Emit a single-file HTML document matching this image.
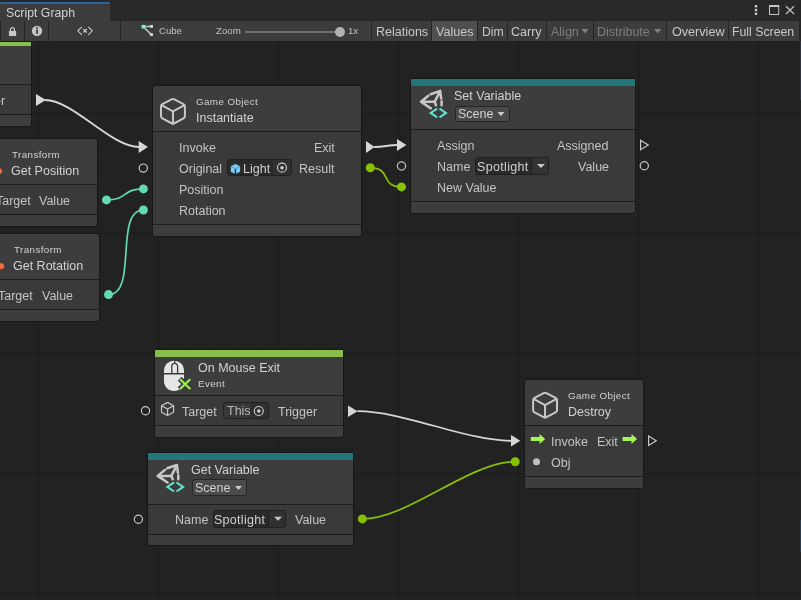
<!DOCTYPE html><html><head><meta charset="utf-8"><style>
*{margin:0;padding:0;box-sizing:border-box}
html,body{width:801px;height:600px;overflow:hidden;background:#222222}
body{position:relative;font-family:"Liberation Sans",sans-serif}
.t{position:absolute;line-height:1;white-space:nowrap;will-change:transform}
.node{position:absolute;background:#3d3d3d;border:1px solid #171717;border-radius:3px;box-sizing:content-box}
svg{position:absolute;left:0;top:0;overflow:visible}
</style></head><body>
<div style="position:absolute;left:0;top:41px;width:801px;height:559px;background-color:#222222;background-image:linear-gradient(to right,#1a1a1a 0,#1a1a1a 1px,transparent 1px),linear-gradient(to bottom,#1a1a1a 0,#1a1a1a 1px,transparent 1px),linear-gradient(to right,#202020 0,#202020 1px,transparent 1px),linear-gradient(to bottom,#202020 0,#202020 1px,transparent 1px);background-size:120px 120px,120px 120px,12px 12px,12px 12px;background-position:38px 72px,38px 72px,2px 0px,2px 0px;"></div>
<div style="position:absolute;left:0;top:0;width:801px;height:41px;z-index:5">
<div style="position:absolute;left:0px;top:0px;width:801px;height:21px;background:#282828"></div>
<div style="position:absolute;left:0px;top:2px;width:110px;height:19px;background:#3c3c3c"></div>
<div style="position:absolute;left:0px;top:2px;width:110px;height:2px;background:#2d65a0;border-radius:2px 2px 0 0"></div>
<div class="t" style="left:6.30px;top:6.99px;font-size:12.3px;color:#d2d2d2;">Script Graph</div>
<div style="position:absolute;left:0px;top:21px;width:801px;height:20px;background:#3c3c3c"></div>
<div style="position:absolute;left:0px;top:21px;width:1px;height:20px;background:#242424"></div>
<div style="position:absolute;left:24px;top:21px;width:1px;height:20px;background:#242424"></div>
<div style="position:absolute;left:48px;top:21px;width:1px;height:20px;background:#242424"></div>
<div style="position:absolute;left:120px;top:21px;width:1px;height:20px;background:#242424"></div>
<div style="position:absolute;left:371px;top:21px;width:1px;height:20px;background:#242424"></div>
<div style="position:absolute;left:431px;top:21px;width:1px;height:20px;background:#242424"></div>
<div style="position:absolute;left:477px;top:21px;width:1px;height:20px;background:#242424"></div>
<div style="position:absolute;left:507px;top:21px;width:1px;height:20px;background:#242424"></div>
<div style="position:absolute;left:546px;top:21px;width:1px;height:20px;background:#242424"></div>
<div style="position:absolute;left:593px;top:21px;width:1px;height:20px;background:#242424"></div>
<div style="position:absolute;left:666px;top:21px;width:1px;height:20px;background:#242424"></div>
<div style="position:absolute;left:728px;top:21px;width:1px;height:20px;background:#242424"></div>
<div style="position:absolute;left:432px;top:21px;width:45px;height:20px;background:#4f4f4f"></div>
<div class="t" style="left:376.20px;top:25.82px;font-size:12.5px;color:#c9c9c9;">Relations</div>
<div class="t" style="left:436.20px;top:25.73px;font-size:12.6px;color:#c9c9c9;">Values</div>
<div class="t" style="left:482.40px;top:26.07px;font-size:12.2px;color:#c9c9c9;">Dim</div>
<div class="t" style="left:511.10px;top:25.82px;font-size:12.5px;color:#c9c9c9;">Carry</div>
<div class="t" style="left:550.60px;top:25.82px;font-size:12.5px;color:#7f7f7f;">Align</div>
<div class="t" style="left:596.50px;top:25.82px;font-size:12.5px;color:#7f7f7f;">Distribute</div>
<div class="t" style="left:671.50px;top:25.73px;font-size:12.6px;color:#c9c9c9;">Overview</div>
<div class="t" style="left:732.20px;top:25.99px;font-size:12.3px;color:#c9c9c9;">Full Screen</div>
<div class="t" style="left:159.20px;top:26.37px;font-size:9.6px;color:#c4c4c4;">Cube</div>
<div class="t" style="left:216.10px;top:25.59px;font-size:9.7px;color:#c4c4c4;">Zoom</div>
<div class="t" style="left:348.40px;top:25.97px;font-size:9.6px;color:#c4c4c4;">1x</div>
<svg width="801" height="41" style="position:absolute;left:0;top:0">
<!-- dropdown arrows -->
<path d="M581.5 29 L588.5 29 L585 33.5 Z" fill="#7f7f7f"/>
<path d="M654 29 L661.5 29 L657.7 33.5 Z" fill="#7f7f7f"/>
<!-- lock -->
<path d="M10.5 31.2 L10.5 29.5 A1.95 1.95 0 0 1 14.4 29.5 L14.4 31.2" fill="none" stroke="#c8c8c8" stroke-width="1.3"/>
<rect x="8.9" y="31" width="7.25" height="5" fill="#c8c8c8"/>
<!-- info -->
<circle cx="37" cy="30.9" r="5.2" fill="#c4c4c4"/>
<rect x="36.2" y="29.5" width="1.7" height="4.3" fill="#3c3c3c"/>
<rect x="36.2" y="27.2" width="1.7" height="1.6" fill="#3c3c3c"/>
<!-- <x> -->
<path d="M81.8 26.8 L77.9 30.8 L81.8 34.8 M88.3 26.8 L92.2 30.8 L88.3 34.8 M83.3 29 L86.8 32.5 M86.8 29 L83.3 32.5" fill="none" stroke="#c8c8c8" stroke-width="1.1"/>
<!-- graph icon -->
<path d="M144 26.5 L151 26.4 M143.8 27.2 L151.3 34.6" stroke="#c4c4c4" stroke-width="1.5" fill="none"/>
<rect x="141.6" y="24.9" width="3.6" height="3.6" fill="#80eedd"/>
<rect x="150" y="25" width="3" height="2.8" fill="#d4d4d4"/>
<rect x="150" y="33.2" width="3" height="2.8" fill="#d4d4d4"/>
<!-- slider -->
<rect x="245" y="31" width="96" height="2" fill="#707070"/>
<circle cx="340" cy="32" r="5" fill="#b2b2b2"/>
<!-- window buttons -->
<rect x="754.8" y="5" width="2.4" height="2.4" fill="#c8c8c8"/>
<rect x="754.8" y="8.8" width="2.4" height="2.4" fill="#c8c8c8"/>
<rect x="754.8" y="12.6" width="2.4" height="2.4" fill="#c8c8c8"/>
<rect x="769.5" y="5.5" width="9.2" height="9" fill="none" stroke="#c4c4c4" stroke-width="1"/>
<rect x="769" y="5" width="10.2" height="2" fill="#c4c4c4"/>
<path d="M786 6.3 L794 14 M794 6.3 L786 14" stroke="#c4c4c4" stroke-width="1.2"/>
</svg>
<div style="position:absolute;left:799px;top:0px;width:2px;height:41px;background:#252525"></div>
<div style="position:absolute;left:800px;top:41px;width:1px;height:559px;background:#232323"></div>
<div style="position:absolute;left:800px;top:41px;width:1px;height:59px;background:#2e3540"></div>
<div style="position:absolute;left:800px;top:520px;width:1px;height:32px;background:#2a3a48"></div>
</div>
<div class="node" style="left:-7px;top:41px;width:37px;height:84px;"></div>
<div style="position:absolute;left:-6px;top:42px;width:37px;height:4px;background:#86c04a;border-radius:1px 1px 0 0"></div>
<div style="position:absolute;left:-6px;top:85px;width:37px;height:29px;background:#3a3a3a"></div>
<div style="position:absolute;left:-6px;top:84px;width:37px;height:1px;background:#1d1d1d"></div>
<div style="position:absolute;left:-6px;top:114px;width:37px;height:1px;background:#1d1d1d"></div>
<div class="t" style="right:795.60px;top:94.82px;font-size:12.5px;color:#c4c4c4;">Trigger</div>
<div class="node" style="left:-7px;top:138px;width:103px;height:87px;"></div>
<div style="position:absolute;left:-6px;top:185px;width:103px;height:29px;background:#3a3a3a"></div>
<div style="position:absolute;left:-6px;top:184px;width:103px;height:1px;background:#1d1d1d"></div>
<div style="position:absolute;left:-6px;top:214px;width:103px;height:1px;background:#1d1d1d"></div>
<div class="t" style="left:11.50px;top:150.40px;font-size:9.8px;color:#d2d2d2;letter-spacing:0.4px;">Transform</div>
<div class="t" style="left:10.50px;top:164.82px;font-size:12.5px;color:#d2d2d2;">Get Position</div>
<div class="t" style="right:770.20px;top:194.52px;font-size:12.5px;color:#c4c4c4;">Target</div>
<div class="t" style="left:39.40px;top:194.52px;font-size:12.5px;color:#c4c4c4;">Value</div>
<div class="node" style="left:-7px;top:233px;width:105px;height:87px;"></div>
<div style="position:absolute;left:-6px;top:280px;width:105px;height:29px;background:#3a3a3a"></div>
<div style="position:absolute;left:-6px;top:279px;width:105px;height:1px;background:#1d1d1d"></div>
<div style="position:absolute;left:-6px;top:309px;width:105px;height:1px;background:#1d1d1d"></div>
<div class="t" style="left:13.70px;top:245.40px;font-size:9.8px;color:#d2d2d2;letter-spacing:0.4px;">Transform</div>
<div class="t" style="left:12.70px;top:259.82px;font-size:12.5px;color:#d2d2d2;">Get Rotation</div>
<div class="t" style="right:768.00px;top:289.52px;font-size:12.5px;color:#c4c4c4;">Target</div>
<div class="t" style="left:41.80px;top:289.52px;font-size:12.5px;color:#c4c4c4;">Value</div>
<div class="node" style="left:152px;top:85px;width:208px;height:150px;"></div>
<div style="position:absolute;left:153px;top:132px;width:208px;height:92px;background:#3a3a3a"></div>
<div style="position:absolute;left:153px;top:131px;width:208px;height:1px;background:#1d1d1d"></div>
<div style="position:absolute;left:153px;top:224px;width:208px;height:1px;background:#1d1d1d"></div>
<div class="t" style="left:196.20px;top:97.30px;font-size:9.8px;color:#d2d2d2;letter-spacing:0.4px;">Game Object</div>
<div class="t" style="left:196.20px;top:112.32px;font-size:12.5px;color:#d2d2d2;">Instantiate</div>
<div class="t" style="left:179.30px;top:142.32px;font-size:12.5px;color:#c4c4c4;">Invoke</div>
<div class="t" style="left:179.30px;top:163.32px;font-size:12.5px;color:#c4c4c4;">Original</div>
<div class="t" style="left:179.30px;top:184.12px;font-size:12.5px;color:#c4c4c4;">Position</div>
<div class="t" style="left:179.30px;top:204.92px;font-size:12.5px;color:#c4c4c4;">Rotation</div>
<div class="t" style="right:466.10px;top:142.32px;font-size:12.5px;color:#c4c4c4;">Exit</div>
<div class="t" style="right:466.10px;top:163.32px;font-size:12.5px;color:#c4c4c4;">Result</div>
<div style="position:absolute;left:227.4px;top:159.3px;width:64.6px;height:17.19999999999999px;background:#2a2a2a;border:1px solid #1f1f1f;border-radius:3px"></div>
<div style="position:absolute;left:273px;top:160.3px;width:18px;height:15.199999999999989px;background:#303030;border-radius:0 2px 2px 0"></div>
<div class="t" style="left:242.80px;top:163.42px;font-size:12.5px;color:#d0d0d0;">Light</div>
<div class="node" style="left:410px;top:78px;width:224px;height:134px;"></div>
<div style="position:absolute;left:411px;top:79px;width:224px;height:7px;background:#23777a;border-radius:1px 1px 0 0"></div>
<div style="position:absolute;left:411px;top:130px;width:224px;height:71px;background:#3a3a3a"></div>
<div style="position:absolute;left:411px;top:129px;width:224px;height:1px;background:#1d1d1d"></div>
<div style="position:absolute;left:411px;top:201px;width:224px;height:1px;background:#1d1d1d"></div>
<div class="t" style="left:453.70px;top:90.32px;font-size:12.5px;color:#d2d2d2;">Set Variable</div>
<div style="position:absolute;left:454.9px;top:105.7px;width:55.200000000000045px;height:16.200000000000003px;background:#4a4a4a;border:1px solid #262626;border-radius:3px"></div>
<div class="t" style="left:457.80px;top:107.72px;font-size:12.5px;color:#d0d0d0;">Scene</div>
<div class="t" style="left:437.40px;top:140.32px;font-size:12.5px;color:#c4c4c4;">Assign</div>
<div class="t" style="left:437.40px;top:161.02px;font-size:12.5px;color:#c4c4c4;">Name</div>
<div class="t" style="left:437.40px;top:182.02px;font-size:12.5px;color:#c4c4c4;">New Value</div>
<div class="t" style="right:192.25px;top:140.32px;font-size:12.5px;color:#c4c4c4;">Assigned</div>
<div class="t" style="right:192.25px;top:161.07px;font-size:12.5px;color:#c4c4c4;">Value</div>
<div style="position:absolute;left:475.3px;top:157px;width:57.099999999999966px;height:17.80000000000001px;background:#2a2a2a;border:1px solid #1f1f1f;border-radius:3px 0 0 3px"></div>
<div style="position:absolute;left:531.4px;top:157px;width:17.700000000000045px;height:17.80000000000001px;background:#333333;border:1px solid #1f1f1f;border-radius:0 3px 3px 0"></div>
<div class="t" style="left:477.00px;top:160.52px;font-size:12.5px;color:#d0d0d0;letter-spacing:0.33px;">Spotlight</div>
<div class="node" style="left:154px;top:349px;width:188px;height:87px;"></div>
<div style="position:absolute;left:155px;top:350px;width:188px;height:7px;background:#86c04a;border-radius:1px 1px 0 0"></div>
<div style="position:absolute;left:155px;top:396px;width:188px;height:29px;background:#3a3a3a"></div>
<div style="position:absolute;left:155px;top:395px;width:188px;height:1px;background:#1d1d1d"></div>
<div style="position:absolute;left:155px;top:425px;width:188px;height:1px;background:#1d1d1d"></div>
<div class="t" style="left:197.50px;top:362.12px;font-size:12.5px;color:#d2d2d2;">On Mouse Exit</div>
<div class="t" style="left:198.30px;top:378.50px;font-size:9.8px;color:#d2d2d2;letter-spacing:0.4px;">Event</div>
<div class="t" style="left:181.90px;top:405.92px;font-size:12.5px;color:#c4c4c4;">Target</div>
<div style="position:absolute;left:223.4px;top:402.2px;width:45.20000000000002px;height:17.19999999999999px;background:#2f2f2f;border:1px solid #1f1f1f;border-radius:3px"></div>
<div style="position:absolute;left:224.4px;top:403.2px;width:25.599999999999994px;height:15.199999999999989px;background:#383838;border-radius:2px 0 0 2px"></div>
<div class="t" style="left:226.50px;top:405.32px;font-size:12.5px;color:#b8b8b8;">This</div>
<div class="t" style="left:277.70px;top:406.12px;font-size:12.5px;color:#c4c4c4;">Trigger</div>
<div class="node" style="left:147px;top:452px;width:205px;height:92px;"></div>
<div style="position:absolute;left:148px;top:453px;width:205px;height:7px;background:#23777a;border-radius:1px 1px 0 0"></div>
<div style="position:absolute;left:148px;top:505px;width:205px;height:29px;background:#3a3a3a"></div>
<div style="position:absolute;left:148px;top:504px;width:205px;height:1px;background:#1d1d1d"></div>
<div style="position:absolute;left:148px;top:534px;width:205px;height:1px;background:#1d1d1d"></div>
<div class="t" style="left:190.60px;top:463.72px;font-size:12.5px;color:#d2d2d2;">Get Variable</div>
<div style="position:absolute;left:191.8px;top:479.3px;width:55.39999999999998px;height:16.899999999999977px;background:#4b4b4b;border:1px solid #262626;border-radius:3px"></div>
<div class="t" style="left:195.00px;top:482.32px;font-size:12.5px;color:#d0d0d0;">Scene</div>
<div class="t" style="left:174.50px;top:514.12px;font-size:12.5px;color:#c4c4c4;">Name</div>
<div style="position:absolute;left:212.6px;top:510px;width:56.70000000000002px;height:17.5px;background:#2a2a2a;border:1px solid #1f1f1f;border-radius:3px 0 0 3px"></div>
<div style="position:absolute;left:268.3px;top:510px;width:18.099999999999966px;height:17.5px;background:#303030;border:1px solid #1f1f1f;border-radius:0 3px 3px 0"></div>
<div class="t" style="left:213.80px;top:513.52px;font-size:12.5px;color:#d0d0d0;letter-spacing:0.28px;">Spotlight</div>
<div class="t" style="left:295.00px;top:514.12px;font-size:12.5px;color:#c4c4c4;">Value</div>
<div class="node" style="left:524px;top:379px;width:118px;height:108px;"></div>
<div style="position:absolute;left:525px;top:426px;width:118px;height:50px;background:#3a3a3a"></div>
<div style="position:absolute;left:525px;top:425px;width:118px;height:1px;background:#1d1d1d"></div>
<div style="position:absolute;left:525px;top:476px;width:118px;height:1px;background:#1d1d1d"></div>
<div class="t" style="left:568.30px;top:390.80px;font-size:9.8px;color:#d2d2d2;letter-spacing:0.4px;">Game Object</div>
<div class="t" style="left:567.50px;top:406.12px;font-size:12.5px;color:#d2d2d2;">Destroy</div>
<div class="t" style="left:551.25px;top:436.32px;font-size:12.5px;color:#c4c4c4;">Invoke</div>
<div class="t" style="left:597.00px;top:436.32px;font-size:12.5px;color:#c4c4c4;">Exit</div>
<div class="t" style="left:551.25px;top:457.22px;font-size:12.5px;color:#c4c4c4;">Obj</div>
<svg width="801" height="600" style="position:absolute;left:0;top:0"><path d="M45 100 C73.2 100 110.8 147 139 147" fill="none" stroke="#d6d6d6" stroke-width="1.8"/><path d="M106.5 199.9 C128.64000000000001 199.9 121.26 188.9 143.4 188.9" fill="none" stroke="#64d9b2" stroke-width="1.7"/><path d="M108.5 294.6 C138.165 294.6 113.735 210 143.4 210" fill="none" stroke="#64d9b2" stroke-width="1.7"/><path d="M374 147 C386.0 147 386.0 145 398 145" fill="none" stroke="#d6d6d6" stroke-width="1.8"/><path d="M370.3 167.8 C392.14 167.8 379.66 186.9 401.5 186.9" fill="none" stroke="#88c004" stroke-width="1.7"/><path d="M357.3 411.2 C403.71000000000004 411.2 465.59000000000003 440.8 512 440.8" fill="none" stroke="#d6d6d6" stroke-width="1.8"/><path d="M362.4 518.9 C408.24 518.9 469.36 461.7 515.2 461.7" fill="none" stroke="#88c004" stroke-width="1.7"/><path d="M36 94 L46 100 L36 106 Z" fill="#d6d6d6"/><circle cx="-0.9" cy="171.2" r="3" fill="#f46a3a"/><circle cx="1.1" cy="266.2" r="3" fill="#f46a3a"/><circle cx="106.5" cy="199.9" r="4.5" fill="#64d9b2"/><circle cx="108.5" cy="294.6" r="4.5" fill="#64d9b2"/><path d="M171.54 99.35 Q172.95 98.60 174.36 99.35 L183.49 104.20 Q184.90 104.95 184.90 106.55 L184.90 116.05 Q184.90 117.65 183.49 118.40 L174.36 123.25 Q172.95 124.00 171.54 123.25 L162.41 118.40 Q161.00 117.65 161.00 116.05 L161.00 106.55 Q161.00 104.95 162.41 104.20 Z M161.0 104.94999999999999 L172.95 111.3 L184.9 104.94999999999999 M172.95 111.3 L172.95 124.0" fill="none" stroke="#c8c8c8" stroke-width="2" stroke-linejoin="round"/><path d="M138.7 141 L148 147 L138.7 153 Z" fill="#d6d6d6"/><circle cx="143.3" cy="168.1" r="4.1" fill="none" stroke="#c8c8c8" stroke-width="1.2"/><circle cx="143.4" cy="188.9" r="4.5" fill="#64d9b2"/><circle cx="143.4" cy="210" r="4.5" fill="#64d9b2"/><path d="M366 141 L374.6 147 L366 153 Z" fill="#d6d6d6"/><circle cx="370.3" cy="167.8" r="4.5" fill="#88c004"/><path d="M235.45 163.9 L240.1 166.3 L240.1 171.8 L235.45 174.1 L230.8 171.8 L230.8 166.3 Z" fill="#78cdf5"/><path d="M230.8 166.4 L235.45 168.8 L240.1 166.4" fill="none" stroke="#4e9cc8" stroke-width="0.9"/><path d="M235.45 168.8 L235.45 174.2" stroke="#262626" stroke-width="1.3"/><circle cx="282" cy="167.7" r="4.5" fill="none" stroke="#c8c8c8" stroke-width="1.2"/><circle cx="282" cy="167.7" r="1.8" fill="#d0d0d0"/><path d="M421.00 101.80 L428.30 95.80 M430.60 94.20 L440.20 90.90 L441.20 98.60 M441.60 101.20 L441.60 105.20 M421.00 101.80 L434.60 101.80 L440.20 91.20 M434.60 101.80 L436.00 105.20 M421.00 101.80 L430.80 108.40" fill="none" stroke="#c8c8c8" stroke-width="2.5" stroke-linejoin="round" stroke-linecap="round"/><path d="M437.15000000000003 108.6 L430.7 112.94999999999999 L437.15000000000003 117.3 M439.55 108.6 L446 112.94999999999999 L439.55 117.3" fill="none" stroke="#5ee6cc" stroke-width="2"/><path d="M497.5 112.1 L504.5 112.1 L501 116.2 Z" fill="#c8c8c8"/><path d="M536.9 164.1 L545 164.1 L541 167.9 Z" fill="#c8c8c8"/><path d="M397 139 L406.4 145 L397 151 Z" fill="#d6d6d6"/><circle cx="401.5" cy="166" r="4.1" fill="none" stroke="#c8c8c8" stroke-width="1.2"/><circle cx="401.5" cy="186.9" r="4.5" fill="#88c004"/><path d="M640.6 140.3 L648.2 145 L640.6 149.7 Z" fill="none" stroke="#c8c8c8" stroke-width="1.2"/><circle cx="644.3" cy="165.8" r="4.1" fill="none" stroke="#c8c8c8" stroke-width="1.2"/><path d="M164 373 L164 370.8 C164 365 168.5 360.8 174 360.8 C179.5 360.8 184 365 184 370.8 L184 373 Z" fill="#e6e6e6"/><path d="M164 374.6 L184 374.6 L184 381 C184 387 179.5 391 174 391 C168.5 391 164 387 164 381 Z" fill="#e6e6e6"/><path d="M171.8 373 L171.8 366.3 A2.9 2.9 0 0 1 177.6 366.3 L177.6 373 M174.7 360.5 L174.7 363.4" fill="none" stroke="#3b3b3b" stroke-width="1.3"/><path d="M179.6 378.8 L190.7 389.3 M190.7 378.8 L179.6 389.3" stroke="#3b3b3b" stroke-width="5.5"/><path d="M180 379.2 L190.3 389 M190.3 379.2 L180 389" stroke="#98ee52" stroke-width="2.2"/><circle cx="145.5" cy="410.8" r="4.1" fill="none" stroke="#c8c8c8" stroke-width="1.2"/><path d="M167.11 402.64 Q167.55 402.40 167.99 402.64 L173.16 405.44 Q173.60 405.68 173.60 406.18 L173.60 411.73 Q173.60 412.23 173.16 412.46 L167.99 415.26 Q167.55 415.50 167.11 415.26 L161.94 412.46 Q161.50 412.23 161.50 411.73 L161.50 406.18 Q161.50 405.68 161.94 405.44 Z M161.5 405.675 L167.55 408.95000000000005 L173.6 405.675 M167.55 408.95000000000005 L167.55 415.5" fill="none" stroke="#c8c8c8" stroke-width="1.2" stroke-linejoin="round"/><circle cx="258.8" cy="411" r="4.5" fill="none" stroke="#c8c8c8" stroke-width="1.2"/><circle cx="258.8" cy="411" r="1.8" fill="#d0d0d0"/><path d="M348 405.4 L357.5 411.2 L348 417.0 Z" fill="#d6d6d6"/><path d="M157.70 475.90 L165.00 469.90 M167.30 468.30 L176.90 465.00 L177.90 472.70 M178.30 475.30 L178.30 479.30 M157.70 475.90 L171.30 475.90 L176.90 465.30 M171.30 475.90 L172.70 479.30 M157.70 475.90 L167.50 482.50" fill="none" stroke="#c8c8c8" stroke-width="2.5" stroke-linejoin="round" stroke-linecap="round"/><path d="M174.05 482.3 L167.3 486.9 L174.05 491.5 M176.45 482.3 L183.2 486.9 L176.45 491.5" fill="none" stroke="#5ee6cc" stroke-width="2"/><path d="M235 486 L242 486 L238.5 490 Z" fill="#c8c8c8"/><path d="M274 516.8 L282 516.8 L278 520.7 Z" fill="#c8c8c8"/><circle cx="138.4" cy="519.3" r="4.1" fill="none" stroke="#c8c8c8" stroke-width="1.2"/><circle cx="362.4" cy="518.9" r="4.5" fill="#88c004"/><path d="M543.64 393.06 Q545.05 392.30 546.46 393.06 L555.59 397.97 Q557.00 398.73 557.00 400.33 L557.00 409.97 Q557.00 411.57 555.59 412.33 L546.46 417.24 Q545.05 418.00 543.64 417.24 L534.51 412.33 Q533.10 411.57 533.10 409.97 L533.10 400.33 Q533.10 398.73 534.51 397.97 Z M533.1 398.725 L545.05 405.15 L557.0 398.725 M545.05 405.15 L545.05 418.0" fill="none" stroke="#c8c8c8" stroke-width="2" stroke-linejoin="round"/><path d="M511 435.0 L520.3 440.8 L511 446.6 Z" fill="#d6d6d6"/><circle cx="515.2" cy="461.7" r="4.5" fill="#88c004"/><path d="M530.8 437 L539.6 437 L539.6 434 L545.2 439 L539.6 444 L539.6 441 L530.8 441 Z" fill="#a5f55a"/><path d="M622.5 437 L631.5 437 L631.5 434 L637.1 439 L631.5 444 L631.5 441 L622.5 441 Z" fill="#a5f55a"/><circle cx="536.5" cy="461.7" r="3.5" fill="#c0c0c0"/><path d="M648.6 436.1 L656.2 440.8 L648.6 445.5 Z" fill="none" stroke="#c8c8c8" stroke-width="1.2"/></svg>
</body></html>
